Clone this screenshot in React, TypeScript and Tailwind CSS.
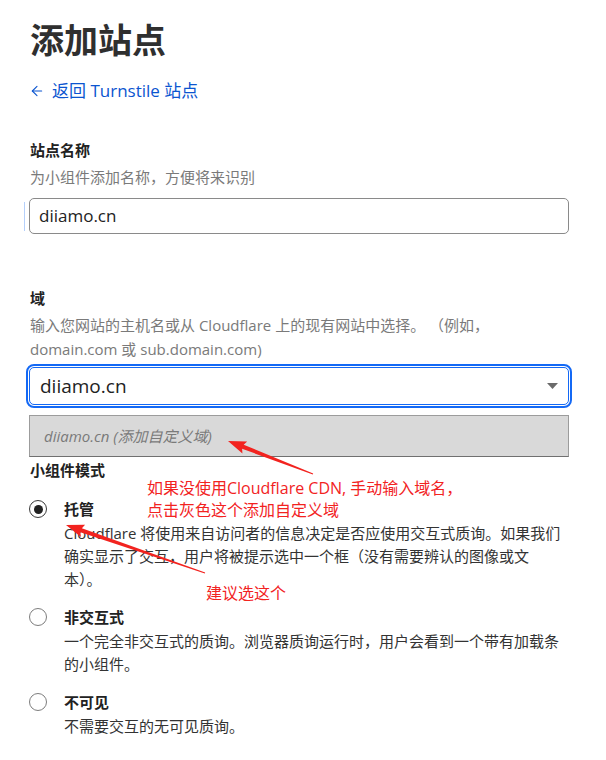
import { ArrowLeft } from 'lucide-react';

const font = { fontFamily: '"Open Sans", "Noto Sans CJK SC", sans-serif' };

// tapered annotation arrow, tail -> tip
function Arrow({ x1, y1, x2, y2 }: { x1: number; y1: number; x2: number; y2: number }) {
  const dx = x2 - x1;
  const dy = y2 - y1;
  const len = Math.hypot(dx, dy);
  const ux = dx / len;
  const uy = dy / len;
  const nx = -uy;
  const ny = ux;
  const head = 16;
  const bx = x2 - ux * head;
  const by = y2 - uy * head;
  const pts = [
    [x1 + nx * 0.5, y1 + ny * 0.5],
    [bx + nx * 2.2, by + ny * 2.2],
    [bx - ux * 2 + nx * 6.5, by - uy * 2 + ny * 6.5],
    [x2, y2],
    [bx - ux * 2 - nx * 6.5, by - uy * 2 - ny * 6.5],
    [bx - nx * 2.2, by - ny * 2.2],
    [x1 - nx * 0.5, y1 - ny * 0.5],
  ];
  return <polygon points={pts.map((p) => p.join(',')).join(' ')} fill="#f2231f" />;
}

function Radio({ checked, title, children }: { checked?: boolean; title: string; children: React.ReactNode }) {
  return (
    <div className="flex items-start">
      <div className="flex h-6 w-[35px] shrink-0 items-center">
        <span
          className={`flex h-[18px] w-[18px] items-center justify-center rounded-full border-[1.5px] ${
            checked ? 'border-[#3a3a3a]' : 'border-[#7d7d7d]'
          }`}
        >
          {checked && <span className="h-[9px] w-[9px] rounded-full bg-[#222]" />}
        </span>
      </div>
      <div>
        <div className="text-[15px] font-bold leading-6 text-[#222]">{title}</div>
        <div className="mt-px text-[15px] leading-[23px] text-[#333] whitespace-nowrap">{children}</div>
      </div>
    </div>
  );
}

export default function App() {
  return (
    <div className="relative h-[760px] w-[606px] overflow-hidden bg-white" style={font}>
      <div className="pl-[29px] pr-[37px] pt-[18px]">
        <h1 className="pl-px text-[34px] font-bold leading-[44px] text-[#2f2f2f]">添加站点</h1>

        <a className="mt-[17px] flex h-6 items-center gap-[7px] text-[17px] text-[#0b55d0]">
          <ArrowLeft className="h-4 w-4" strokeWidth={1.6} />
          <span>返回 Turnstile 站点</span>
        </a>

        {/* site name */}
        <div className="mt-9 pl-px text-[15px] font-bold leading-[22px] text-[#222]">站点名称</div>
        <div className="mt-[5px] pl-px text-[15px] leading-[22px] text-[#7a7a7a]">为小组件添加名称，方便将来识别</div>
        <div className="-ml-[5px] mt-[10px] flex items-center gap-1">
          <div className="h-[29px] w-px bg-[#b5d0fb]" />
          <div className="flex h-9 flex-1 items-center rounded-[5px] border border-[#8a8a8a] px-[9px] text-[17px] text-[#222]">
            diiamo.cn
          </div>
        </div>

        {/* domain */}
        <div className="mt-[53px] pl-px text-[15px] font-bold leading-[22px] text-[#222]">域</div>
        <div className="mt-1 pl-px text-[15px] leading-6 text-[#7a7a7a]">
          输入您网站的主机名或从 Cloudflare 上的现有网站中选择。 （例如，
          <br />
          domain.com 或 sub.domain.com)
        </div>
        <div className="mt-[6px] flex h-[38px] items-center justify-between rounded-[5px] border border-[#1469f5] pl-[10px] pr-[10px] text-[19px] text-[#222] outline-2 outline-offset-1 outline-[#1469f5]">
          <span>diiamo.cn</span>
          <svg width="11" height="6" viewBox="0 0 11 6">
            <path d="M0 0h11L5.5 6z" fill="#6b6b6b" />
          </svg>
        </div>
        <div className="mt-[10px] flex h-[42px] items-center border border-[#9c9c9c] border-b-[#707070] bg-[#d9d9d9] pl-[14px] text-[15px] italic text-[#7a7a7a]">
          diiamo.cn (添加自定义域)
        </div>

        {/* widget mode */}
        <div className="mt-[2px] pl-px text-[15px] font-bold leading-[22px] text-[#222]">小组件模式</div>
        <div className="mt-4 flex flex-col gap-[14px]">
          <Radio checked title="托管">
            Cloudflare 将使用来自访问者的信息决定是否应使用交互式质询。如果我们
            <br />
            确实显示了交互，用户将被提示选中一个框（没有需要辨认的图像或文
            <br />
            本）。
          </Radio>
          <Radio title="非交互式">
            一个完全非交互式的质询。浏览器质询运行时，用户会看到一个带有加载条
            <br />
            的小组件。
          </Radio>
          <Radio title="不可见">不需要交互的无可见质询。</Radio>
        </div>
      </div>

      {/* annotations */}
      <div className="absolute left-[147px] top-[477px] text-[16px] leading-[22px] text-[#f2231f]">
        如果没使用Cloudflare CDN, 手动输入域名，
        <br />
        点击灰色这个添加自定义域
      </div>
      <div className="absolute left-[206px] top-[582px] text-[16px] leading-[22px] text-[#f2231f]">建议选这个</div>
      <svg className="pointer-events-none absolute inset-0" width="606" height="760">
        <Arrow x1={313} y1={474} x2={228} y2={441} />
        <Arrow x1={205} y1={573} x2={66} y2={525} />
      </svg>
    </div>
  );
}
